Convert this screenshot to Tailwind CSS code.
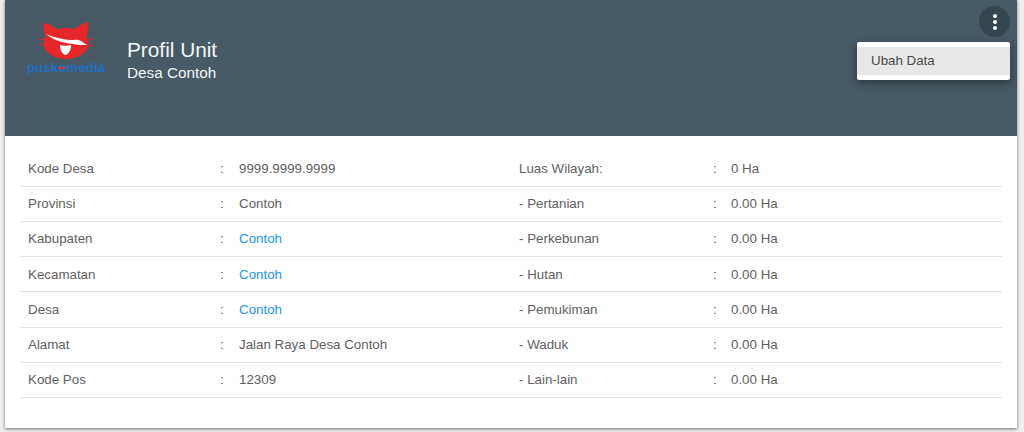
<!DOCTYPE html>
<html lang="en">
  <head>
    <meta charset="UTF-8" />
    <title>Profil Unit</title>
    <meta name="viewport" content="width=device-width, initial-scale=1.0" />
    <script src="https://cdn.jsdelivr.net/npm/@tailwindcss/browser@4"></script>
  </head>
  <body class="bg-[#eeeeee] h-[432px] overflow-hidden font-['Liberation_Sans',Arial,sans-serif]">
    <div class="relative ml-[5px] w-[1012px] h-[428px] bg-white shadow-[0_1px_3px_rgba(0,0,0,0.55)]">
      <header class="flex h-[136px] bg-[#485a65] text-white">
        <div class="ml-[21px] mt-[19px] w-[80px] h-[60px] flex flex-col items-center">
          <svg viewBox="0 0 80 42" class="w-[80px] h-[42px]">
            <ellipse cx="40" cy="24.5" rx="22.5" ry="15.5" fill="#e62628" />
            <path d="M17.5 4 C22 4 28 8 32 11 L20 19 C18 14 17 9 17.5 4 Z M61.5 3 C57 4 51 8 47 11 L60 19 C62 14 62.5 8 61.5 3 Z" fill="#e62628" />
            <path d="M13 20 L20 21 M13 26 L19 25 M60 21 L67 20 M60 25 L67 27" stroke="#e62628" stroke-width="1" />
            <path d="M20 15 C30 19 40 21 48 21 C54 20 56 23 61 26 C55 26 51 26 47 25 C37 24 27 21 20 15 Z" fill="#ffffff" />
            <path d="M34 26 C37 27 42 27 45 26 C45 31 43 35 39.5 36 C36 35 34 31 34 26 Z" fill="#ffffff" />
          </svg>
          <div class="relative text-[13.4px] leading-[14px] font-bold text-[#1f6fc4] whitespace-nowrap">puskomedia<span class="absolute left-[31px] top-[6px] w-[7px] h-[2px] rounded-full bg-[#d8343c]"></span></div>
        </div>
        <div class="ml-[21px] mt-[38px]">
          <h1 class="text-[20.8px] leading-[24px] text-[#f5f6f6]">Profil Unit</h1>
          <p class="mt-[1px] text-[15.3px] leading-[20px] text-[#f5f6f6]">Desa Contoh</p>
        </div>
      </header>

      <button class="absolute top-[6px] left-[974px] w-[31px] h-[31px] rounded-full bg-[#36464f] flex flex-col items-center justify-center gap-[2px]">
        <span class="w-[4px] h-[4px] rounded-full bg-white"></span>
        <span class="w-[4px] h-[4px] rounded-full bg-white"></span>
        <span class="w-[4px] h-[4px] rounded-full bg-white"></span>
      </button>
      <div class="absolute top-[42px] left-[852px] w-[153px] py-[5px] bg-white rounded-[2px] shadow-[0_3px_8px_rgba(0,0,0,0.4)]">
        <div class="h-[28px] pl-[14px] bg-[#e8e8e8] text-[13.33px] leading-[28px] text-[#4a4a4a]">Ubah Data</div>
      </div>

      <main class="mx-[15px] pt-[15.6px] grid grid-cols-[491px_491px] text-[13.33px] text-[#616161]">
        <div>
          <div class="grid grid-cols-[192px_19px_1fr] h-[35.2px] pl-[8px] pt-[0.6px] items-center border-b border-[#e3e3e3]"><span>Kode Desa</span><span>:</span><span>9999.9999.9999</span></div>
          <div class="grid grid-cols-[192px_19px_1fr] h-[35.2px] pl-[8px] pt-[0.6px] items-center border-b border-[#e3e3e3]"><span>Provinsi</span><span>:</span><span>Contoh</span></div>
          <div class="grid grid-cols-[192px_19px_1fr] h-[35.2px] pl-[8px] pt-[0.6px] items-center border-b border-[#e3e3e3]"><span>Kabupaten</span><span>:</span><a class="text-[#2196f3]">Contoh</a></div>
          <div class="grid grid-cols-[192px_19px_1fr] h-[35.2px] pl-[8px] pt-[0.6px] items-center border-b border-[#e3e3e3]"><span>Kecamatan</span><span>:</span><a class="text-[#2196f3]">Contoh</a></div>
          <div class="grid grid-cols-[192px_19px_1fr] h-[35.2px] pl-[8px] pt-[0.6px] items-center border-b border-[#e3e3e3]"><span>Desa</span><span>:</span><a class="text-[#2196f3]">Contoh</a></div>
          <div class="grid grid-cols-[192px_19px_1fr] h-[35.2px] pl-[8px] pt-[0.6px] items-center border-b border-[#e3e3e3]"><span>Alamat</span><span>:</span><span>Jalan Raya Desa Contoh</span></div>
          <div class="grid grid-cols-[192px_19px_1fr] h-[35.2px] pl-[8px] pt-[0.6px] items-center border-b border-[#e3e3e3]"><span>Kode Pos</span><span>:</span><span>12309</span></div>
        </div>
        <div>
          <div class="grid grid-cols-[194px_18px_1fr] h-[35.2px] pl-[8px] pt-[0.6px] items-center border-b border-[#e3e3e3]"><span>Luas Wilayah:</span><span>:</span><span>0 Ha</span></div>
          <div class="grid grid-cols-[194px_18px_1fr] h-[35.2px] pl-[8px] pt-[0.6px] items-center border-b border-[#e3e3e3]"><span>- Pertanian</span><span>:</span><span>0.00 Ha</span></div>
          <div class="grid grid-cols-[194px_18px_1fr] h-[35.2px] pl-[8px] pt-[0.6px] items-center border-b border-[#e3e3e3]"><span>- Perkebunan</span><span>:</span><span>0.00 Ha</span></div>
          <div class="grid grid-cols-[194px_18px_1fr] h-[35.2px] pl-[8px] pt-[0.6px] items-center border-b border-[#e3e3e3]"><span>- Hutan</span><span>:</span><span>0.00 Ha</span></div>
          <div class="grid grid-cols-[194px_18px_1fr] h-[35.2px] pl-[8px] pt-[0.6px] items-center border-b border-[#e3e3e3]"><span>- Pemukiman</span><span>:</span><span>0.00 Ha</span></div>
          <div class="grid grid-cols-[194px_18px_1fr] h-[35.2px] pl-[8px] pt-[0.6px] items-center border-b border-[#e3e3e3]"><span>- Waduk</span><span>:</span><span>0.00 Ha</span></div>
          <div class="grid grid-cols-[194px_18px_1fr] h-[35.2px] pl-[8px] pt-[0.6px] items-center border-b border-[#e3e3e3]"><span>- Lain-lain</span><span>:</span><span>0.00 Ha</span></div>
        </div>
      </main>
    </div>
  </body>
</html>
